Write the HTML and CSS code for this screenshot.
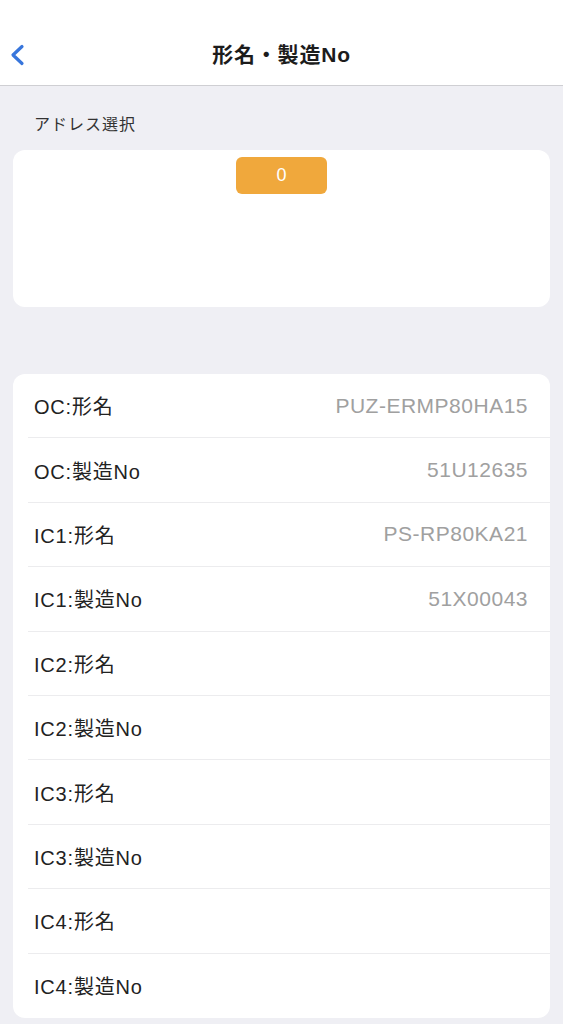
FILE: index.html
```html
<!DOCTYPE html>
<html lang="ja">
<head>
  <meta charset="utf-8">
  <title>形名・製造No</title>
  <link rel="stylesheet" href="styles.css">
</head>
<body>
  <div class="navbar">
    <a class="back-btn" href="#">
      <svg width="16" height="22" viewBox="0 0 16 22">
        <path d="M13 2.5 L4 11 L13 19.5" fill="none" stroke="#3876dc" stroke-width="3.2" stroke-linecap="round" stroke-linejoin="round"/>
      </svg>
    </a>
    <h1>形名・製造No</h1>
  </div>

  <div class="section-title">アドレス選択</div>
  <div class="address-card">
    <button class="address-btn">0</button>
  </div>

  <div class="info-card">
    <div class="info-row"><span class="info-label">OC:形名</span><span class="info-value">PUZ-ERMP80HA15</span></div>
    <div class="info-row"><span class="info-label">OC:製造No</span><span class="info-value">51U12635</span></div>
    <div class="info-row"><span class="info-label">IC1:形名</span><span class="info-value">PS-RP80KA21</span></div>
    <div class="info-row"><span class="info-label">IC1:製造No</span><span class="info-value">51X00043</span></div>
    <div class="info-row"><span class="info-label">IC2:形名</span><span class="info-value"></span></div>
    <div class="info-row"><span class="info-label">IC2:製造No</span><span class="info-value"></span></div>
    <div class="info-row"><span class="info-label">IC3:形名</span><span class="info-value"></span></div>
    <div class="info-row"><span class="info-label">IC3:製造No</span><span class="info-value"></span></div>
    <div class="info-row"><span class="info-label">IC4:形名</span><span class="info-value"></span></div>
    <div class="info-row"><span class="info-label">IC4:製造No</span><span class="info-value"></span></div>
  </div>
</body>
</html>
```

FILE: styles.css
```css
body {
  font-family: "Liberation Sans", "Noto Sans CJK JP", sans-serif;
  margin: 0;
  background-color: #efeff4;
  color: #222;
}

.navbar {
  background-color: #fff;
  height: 86px;
  border-bottom: 1px solid #cfcfd3;
  padding-top: 34px;
  box-sizing: border-box;
  position: relative;
}

.navbar h1 {
  margin: 0;
  height: 42px;
  line-height: 42px;
  text-align: center;
  font-size: 21px;
  font-weight: bold;
  letter-spacing: 0.8px;
  color: #1c1c1c;
}

.back-btn {
  position: absolute;
  left: 9px;
  top: 44px;
}

.section-title {
  margin: 29px 0 15px 34px;
  font-size: 16px;
  line-height: 20px;
  letter-spacing: 1px;
  color: #333;
}

.address-card {
  margin: 0 13px;
  height: 157px;
  background-color: #fff;
  border-radius: 12px;
  padding-top: 7px;
  box-sizing: border-box;
  text-align: center;
}

.address-btn {
  width: 91px;
  height: 37px;
  border: none;
  border-radius: 6px;
  background-color: #f0a83c;
  color: #fff;
  font-family: "Liberation Sans", sans-serif;
  font-size: 18px;
  padding: 0;
}

.info-card {
  margin: 67px 13px 0;
  background-color: #fff;
  border-radius: 12px;
  padding-left: 15px;
}

.info-row {
  display: flex;
  justify-content: space-between;
  align-items: center;
  height: 64.4px;
  box-sizing: border-box;
  padding: 0 22px 0 6px;
  border-bottom: 1px solid #ececee;
}

.info-row:last-child {
  border-bottom: none;
}

.info-label {
  font-size: 20px;
  letter-spacing: 0.8px;
  color: #222;
}

.info-value {
  font-size: 21px;
  letter-spacing: 0.5px;
  color: #a0a0a0;
}
```
